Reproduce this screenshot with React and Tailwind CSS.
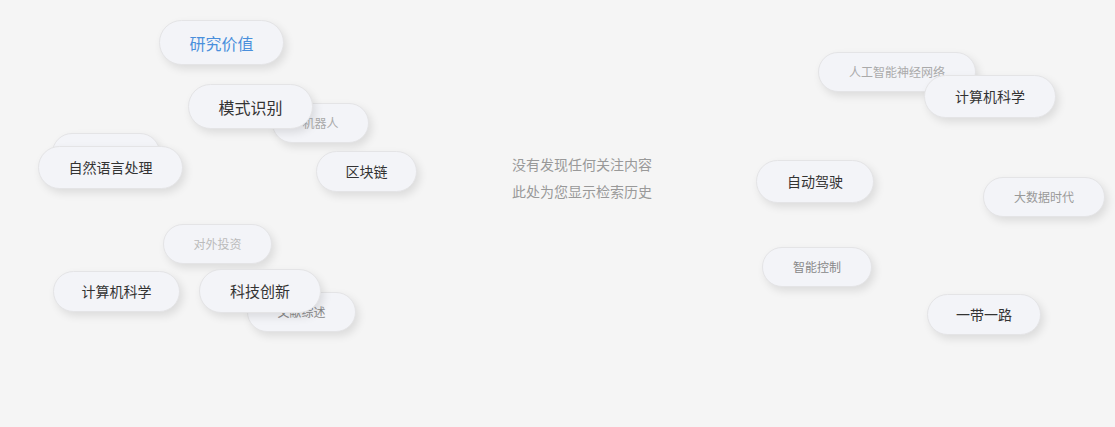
import React from 'react';

// word cloud of history tags — each tag's place on the canvas is the content
const tags = [
  { text: '', pos: 'left-[52px] top-[133px] w-[108px] h-[40px]', cls: 'text-[12px] text-[#bbbbbb]' },
  { text: '机器人', pos: 'left-[272px] top-[103px] w-[97px] h-[40px]', cls: 'text-[12px] text-[#aaaaaa]' },
  { text: '研究价值', pos: 'left-[159px] top-[20px] w-[125px] h-[45px]', cls: 'text-[16px] text-[#4a8fdc]' },
  { text: '模式识别', pos: 'left-[188px] top-[84px] w-[125px] h-[45px]', cls: 'text-[16px] text-[#333333]' },
  { text: '自然语言处理', pos: 'left-[38px] top-[146px] w-[145px] h-[43px]', cls: 'text-[14px] text-[#333333]' },
  { text: '区块链', pos: 'left-[316px] top-[151px] w-[101px] h-[41px]', cls: 'text-[14px] text-[#333333]' },
  { text: '对外投资', pos: 'left-[163px] top-[224px] w-[109px] h-[40px]', cls: 'text-[12px] text-[#bbbbbb]' },
  { text: '文献综述', pos: 'left-[247px] top-[292px] w-[109px] h-[40px]', cls: 'text-[12px] text-[#888888]' },
  { text: '计算机科学', pos: 'left-[53px] top-[271px] w-[127px] h-[41px]', cls: 'text-[14px] text-[#333333]' },
  { text: '科技创新', pos: 'left-[199px] top-[269px] w-[122px] h-[44px]', cls: 'text-[15px] text-[#333333]' },
  { text: '人工智能神经网络', pos: 'left-[818px] top-[52px] w-[158px] h-[40px]', cls: 'text-[12px] text-[#aaaaaa]' },
  { text: '计算机科学', pos: 'left-[924px] top-[75px] w-[132px] h-[43px]', cls: 'text-[14px] text-[#333333]' },
  { text: '自动驾驶', pos: 'left-[756px] top-[160px] w-[118px] h-[43px]', cls: 'text-[14px] text-[#333333]' },
  { text: '大数据时代', pos: 'left-[983px] top-[177px] w-[122px] h-[40px]', cls: 'text-[12px] text-[#999999]' },
  { text: '智能控制', pos: 'left-[762px] top-[247px] w-[110px] h-[40px]', cls: 'text-[12px] text-[#888888]' },
  { text: '一带一路', pos: 'left-[927px] top-[294px] w-[114px] h-[41px]', cls: 'text-[14px] text-[#333333]' },
];

const Tag = ({ tag }) => (
  <div
    className={`absolute flex items-center justify-center rounded-full border border-[#e4e4e6] bg-[#f3f4f8] shadow-[3px_4px_8px_rgba(0,0,0,0.1)] whitespace-nowrap ${tag.pos} ${tag.cls}`}
  >
    {tag.text}
  </div>
);

export default function App() {
  return (
    <div className="relative w-[1115px] h-[427px] overflow-hidden bg-[#f5f5f5] font-['Noto_Sans_CJK_SC','Noto_Sans',sans-serif]">
      <div className="flex flex-col gap-[6px] pt-[154px] pl-[512px] text-[14px] leading-[21px] text-[#999999]">
        <p>没有发现任何关注内容</p>
        <p>此处为您显示检索历史</p>
      </div>
      {tags.map((tag, i) => (
        <Tag key={i} tag={tag} />
      ))}
    </div>
  );
}
